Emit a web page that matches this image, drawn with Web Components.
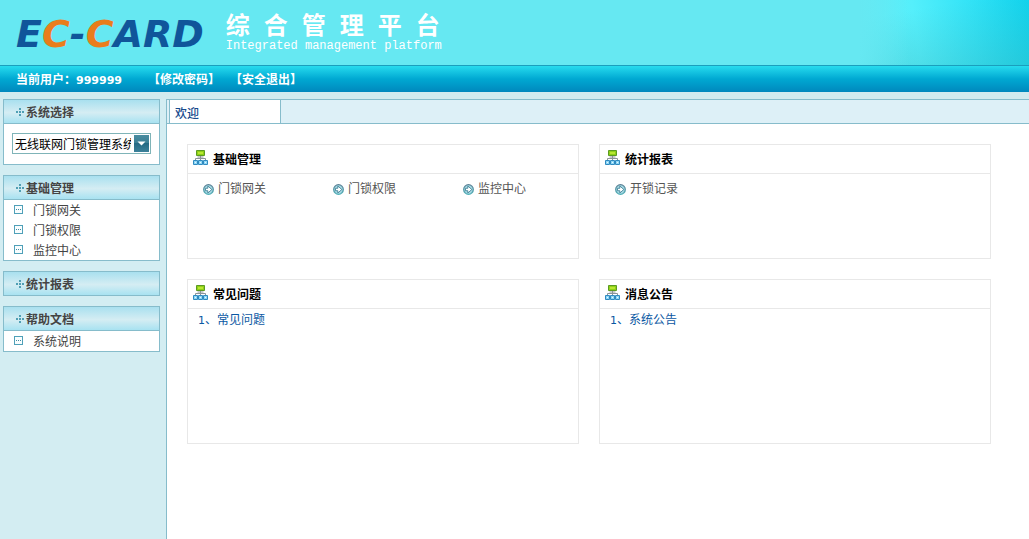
<!DOCTYPE html>
<html lang="zh-CN">
<head>
<meta charset="utf-8">
<title>综合管理平台</title>
<style>
html, body { height: 100%; }
body { margin: 0; font: 12px/20px "Noto Sans CJK SC", sans-serif; color: #444; background: #d1ebef; }
</style>
</head>
<body>
<ec-app></ec-app>
<script>
const define = (name, html) => {
  const template = document.createElement('template');
  template.innerHTML = html;
  customElements.define(name, class extends HTMLElement {
    constructor() {
      super();
      this.attachShadow({ mode: 'open' }).append(template.content.cloneNode(true));
      const link = this.shadowRoot.querySelector('a[data-host]');
      if (link) link.href = this.getAttribute('href') || '#';
    }
  });
};

define('ec-header', `
<style>
:host { display: flex; height: 65px; box-sizing: border-box; padding-left: 16px; gap: 22px;
  background: linear-gradient(90deg, #66e8f2 0, #66e8f200 50px) right / 170px 100% no-repeat,
    linear-gradient(170deg, #40b8b800 20%, #38b0b85c 100%) right / 170px 100% no-repeat,
    linear-gradient(80deg, #66ebf4 0, #55effb 35%, #35e4f7 65%, #10d4ee 100%) right / 170px 100% no-repeat, #66e8f2; }
.logo { font: italic bold 38px/68px "DejaVu Sans", sans-serif; color: #10559a; white-space: nowrap; }
.logo b { color: #e97d1c; }
.titles { color: #fff; padding-top: 12px; }
h1 { display: flex; gap: 14px; margin: 0; font: 700 24px/27px "Liberation Sans", "Noto Sans CJK SC", sans-serif; }
p { margin: 0; font: 12px/14px "Liberation Mono", monospace; white-space: nowrap; }
</style>
<div class="logo">E<b>C</b>-<b>C</b>ARD</div>
<div class="titles">
  <h1><span>综</span><span>合</span><span>管</span><span>理</span><span>平</span><span>台</span></h1>
  <p>Integrated management platform</p>
</div>`);

define('ec-userbar', `
<style>
:host { display: flex; height: 27px; box-sizing: border-box; padding-left: 16px; border-top: 1px solid #1a9fbd;
  font-weight: 700; line-height: 25px; color: #fff; white-space: nowrap;
  background: linear-gradient(#27dbee, #00a8d2 50%, #0088bd); }
.num { font: bold 11px/25px "DejaVu Sans", sans-serif; }
nav { display: flex; gap: 10px; margin-left: 26px; }
a { color: inherit; text-decoration: none; }
</style>
<div>当前用户：<span class="num">999999</span></div>
<nav><a href="#">【修改密码】</a><a href="#">【安全退出】</a></nav>`);

define('ec-panel', `
<style>
:host { display: block; border: 1px solid #86bccb; background: #fff; }
h2 { display: flex; align-items: center; gap: 2px; height: 23px; margin: 0; padding-left: 12px;
  font-size: 12px; font-weight: 700; color: #444; border-bottom: 1px solid #86bccb;
  background: linear-gradient(#a9e0ef, #d5edf3 55%, #a8e2f1); }
:host([collapsed]) h2 { border-bottom: 0; }
</style>
<h2><svg width="8" height="8" viewBox="0 0 8 8" fill="#4f9fb4" shape-rendering="crispEdges" aria-hidden="true"><path d="M3 0h2v2H3zM3 3h2v2H3zM3 6h2v2H3zM0 3h2v2H0zM6 3h2v2H6z"/></svg><slot name="title"></slot></h2>
<slot></slot>`);

define('ec-menu-item', `
<style>
:host { display: block; }
a { display: flex; align-items: center; gap: 10px; height: 20px; padding-left: 10px; color: #444; text-decoration: none; }
svg { margin-bottom: 2px; }
</style>
<a data-host><svg width="9" height="9" viewBox="0 0 9 9" shape-rendering="crispEdges" aria-hidden="true"><path d="M.5.5h8v8h-8z" fill="#f8fdfe" stroke="#4fa0b8"/><path d="M2 4h1v1H2zM4 4h1v1H4zM6 4h1v1H6z" fill="#3f8aa0"/></svg><slot></slot></a>`);

define('ec-system-select', `
<style>
:host { display: block; padding: 9px 8px 10px; }
.box { position: relative; }
select { display: block; appearance: none; width: 100%; height: 21px; margin: 0; padding: 0 19px 0 2px;
  border: 1px solid #7fb4b8; border-radius: 0; background: #fff; color: #000; font: inherit; line-height: 19px; }
svg { position: absolute; top: 2px; right: 2px; pointer-events: none; }
</style>
<div class="box">
  <select aria-label="系统选择"><option>无线联网门锁管理系统</option></select>
  <svg width="15" height="17" viewBox="0 0 15 17" aria-hidden="true"><defs><linearGradient id="g" x2="0" y2="1"><stop stop-color="#4a8ca0"/><stop offset=".48" stop-color="#397e94"/><stop offset=".5" stop-color="#246a84"/><stop offset="1" stop-color="#3c819a"/></linearGradient></defs><path d="M0 0h15v17H0z" fill="url(#g)"/><path d="M3.500 6.500h8L7.500 10.500z" fill="#fff"/></svg>
</div>`);

define('ec-tabs', `
<style>
:host { display: flex; height: 23px; padding-left: 2px; background: #ddf0f7; border: solid #86bccb; border-width: 1px 0; }
button { width: 112px; margin: 0; padding: 2px 5px 0; border: solid #86bccb; border-width: 0 1px; border-radius: 0;
  background: #fff; color: #174a8c; font: inherit; font-weight: 500; text-align: left; }
</style>
<button type="button"><slot></slot></button>`);

define('ec-card', `
<style>
:host { display: block; border: 1px solid #e8e8e8; }
h3 { display: flex; align-items: center; gap: 5px; height: 28px; margin: 0; padding-left: 5px;
  border-bottom: 1px solid #e8e8e8; font-size: 12px; font-weight: 700; color: #000; }
svg { margin-bottom: 3px; }
</style>
<h3><svg width="15" height="15" viewBox="0 0 15 15" aria-hidden="true">
<path d="M7.500 6v4M2.500 10V8.500h10V10M4.500 7h6" fill="none" stroke="#8c9499"/>
<path d="M3.500.5h8v5h-8z" fill="#8fd016" stroke="#5c9a22"/><path d="M5 2h5v2H5z" fill="#b8e632"/>
<g fill="#8fd6f5" stroke="#2f8ac0"><path d="M.5 10.500h4v4h-4zM5.500 10.500h4v4h-4zM10.500 10.500h4v4h-4z"/></g>
<path d="M2 12h1v1H2zM7 12h1v1H7zM12 12h1v1h-1z" fill="#e5f9ff"/></svg><slot name="title"></slot></h3>
<slot></slot>`);

define('ec-shortcuts', `
<style>:host { display: grid; grid-template-columns: repeat(3, 130px); padding: 4px 0 0 15px; }</style><slot></slot>`);

define('ec-shortcut', `
<style>
:host { display: block; }
a { display: flex; align-items: center; gap: 4px; color: #555; text-decoration: none; }
svg { margin-top: 2px; }
</style>
<a data-host><svg width="11" height="11" viewBox="0 0 11 11" aria-hidden="true"><defs><linearGradient id="c" x2="0" y2="1"><stop stop-color="#5c7f94"/><stop offset="1" stop-color="#4fb0b8"/></linearGradient></defs><circle cx="5.500" cy="5.500" r="4.800" fill="#a5d8e2" stroke="url(#c)" stroke-width="1.300"/><path d="M2.500 4.300H4.800V2L8.800 5.500 4.800 9V6.700H2.500z" fill="#fff" stroke="#35798f" stroke-width=".8"/></svg><slot></slot></a>`);

define('ec-article', `
<style>
:host { display: block; padding-left: 10px; }
a { color: #0b58a3; text-decoration: none; }
.num { font-family: "DejaVu Sans", sans-serif; font-size: 11px; }
</style>
<a data-host><span class="num">1</span>、<slot></slot></a>`);

define('ec-app', `
<style>
:host { display: flex; flex-direction: column; min-height: 100%; }
.body { display: flex; flex: 1; padding-top: 7px; }
aside { display: flex; flex-direction: column; gap: 10px; width: 157px; padding: 0 6px 0 3px; background: #d3edf2; }
main { flex: 1; min-width: 0; border-left: 1px solid #86bccb; background: #fff; }
.cards { display: grid; grid-template-columns: repeat(2, minmax(0, 1fr)); grid-template-rows: 115px 165px; gap: 20px; padding: 20px 38px 20px 20px; }
</style>
<ec-header></ec-header>
<ec-userbar></ec-userbar>
<div class="body">
  <aside>
    <ec-panel><span slot="title">系统选择</span><ec-system-select></ec-system-select></ec-panel>
    <ec-panel><span slot="title">基础管理</span>
      <ec-menu-item>门锁网关</ec-menu-item><ec-menu-item>门锁权限</ec-menu-item><ec-menu-item>监控中心</ec-menu-item></ec-panel>
    <ec-panel collapsed><span slot="title">统计报表</span></ec-panel>
    <ec-panel><span slot="title">帮助文档</span><ec-menu-item>系统说明</ec-menu-item></ec-panel>
  </aside>
  <main>
    <ec-tabs>欢迎</ec-tabs>
    <div class="cards">
      <ec-card><span slot="title">基础管理</span><ec-shortcuts>
        <ec-shortcut>门锁网关</ec-shortcut><ec-shortcut>门锁权限</ec-shortcut><ec-shortcut>监控中心</ec-shortcut></ec-shortcuts></ec-card>
      <ec-card><span slot="title">统计报表</span><ec-shortcuts><ec-shortcut>开锁记录</ec-shortcut></ec-shortcuts></ec-card>
      <ec-card><span slot="title">常见问题</span><ec-article>常见问题</ec-article></ec-card>
      <ec-card><span slot="title">消息公告</span><ec-article>系统公告</ec-article></ec-card>
    </div>
  </main>
</div>`);
</script>
</body>
</html>
